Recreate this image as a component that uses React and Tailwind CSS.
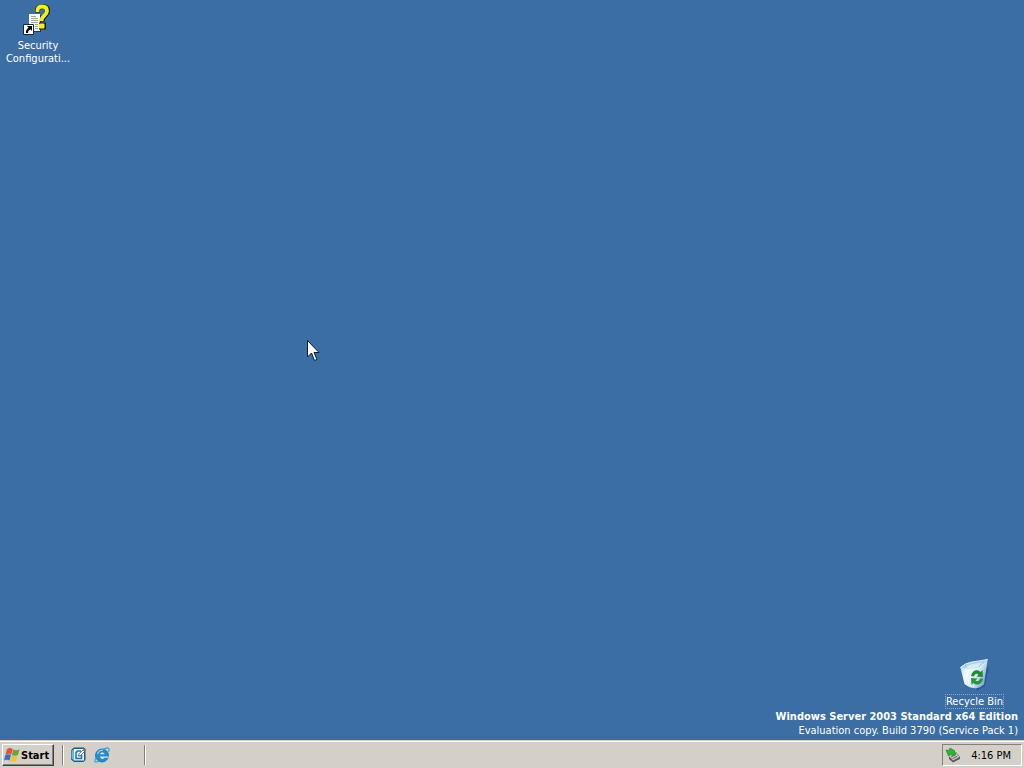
function SecurityIcon() {
  return (
    <svg width="32" height="32" viewBox="0 0 32 32" aria-hidden="true">
      <path d="M8 11h11v17H8z" fill="#26333f" />
      <path d="M7 10h11v17H7z" fill="#f6f5ee" />
      <path
        d="M9 12.500h5M9 14.500h7M9 16.500h7M9 18.500h7M13 20.500h3M13 22.500h3M13 24.500h3"
        stroke="#a3a29b"
        strokeWidth="1"
      />
      <path
        d="M15.500 8.500V6.500c0-3 2-4 5-4s5.200 1.200 5.200 4.500c0 5-5.500 4.500-5.500 10.500"
        fill="none"
        stroke="#222207"
        strokeWidth="5"
      />
      <path d="M17 18.500h7v7h-7z" fill="#222207" />
      <path
        d="M15.500 8V6.500c0-3 2-4 4.700-4s4.800 1.200 4.800 4.500c0 4.500-5.500 4.500-5.500 10"
        fill="none"
        stroke="#f3f018"
        strokeWidth="3.800"
      />
      <rect x="17" y="19.500" width="5.500" height="5" rx="1" fill="#f3f018" />
      <path d="M1.500 20.500h10v10h-10z" fill="#fff" stroke="#15263c" />
      <path d="M5 22h5v5L8.500 25.500C6.500 26.500 6 27.500 6 29H4c-.5-2 .5-4 2.700-5.300z" fill="#000" />
    </svg>
  );
}

function RecycleIcon() {
  return (
    <svg width="32" height="32" viewBox="0 0 32 32" aria-hidden="true">
      <defs>
        <linearGradient id="bin" x1="0" y1="0" x2="1" y2="0.500">
          <stop offset="0" stopColor="#a4d2ec" />
          <stop offset="0.350" stopColor="#f2fbff" />
          <stop offset="0.700" stopColor="#d3e9f5" />
          <stop offset="1" stopColor="#7eaed2" />
        </linearGradient>
      </defs>
      <path d="M8 28l12 4 7-4 4-20z" fill="#183f68" opacity="0.450" />
      <path d="M2.500 10Q11 12 20 9.500L29.500 3 26 26.500Q22 30 18 30.500 11 30 6.500 26z" fill="url(#bin)" />
      <path
        d="M2.500 9.500Q7 5 14 4T29.500 1.500Q28 5 21.500 9.500 10 12.500 2.500 9.500z"
        fill="#a9d0e7"
        stroke="#e3f5fd"
        strokeWidth="1"
      />
      <path d="M8 9.500Q11 6 18 5.500l6-1-4 4.500Q13 11.500 8 9.500z" fill="#d6edf8" />
      <path d="M5.500 13l3 12M9 13.500l2 13" stroke="#fff" strokeWidth="1" opacity="0.700" />
      <path d="M13 18c1-6 6.500-7.500 9.500-4l2-2 .5 7-6.500-.5 2-2c-1.500-1.500-4-.5-4.500 2z" fill="#228b32" />
      <path d="M25 20.500c-1 6-6.500 7.500-9.500 4.500l-2 2-.5-7 6.500.5-2 2c1.500 1.500 4 .5 4.500-2z" fill="#279637" />
    </svg>
  );
}

function WindowsFlag() {
  return (
    <svg width="16" height="16" viewBox="0 0 16 16" aria-hidden="true">
      <path d="M3 2Q6 0 8.800 2L7.300 7.500Q4.500 6 1.500 7.500z" fill="#e4532d" />
      <path d="M9.300 2.500Q12 4 15.500 2.300L14 8Q11 9.500 7.800 8z" fill="#67a53b" />
      <path d="M1.300 8Q4 6.500 7 8L5.500 13.500Q3 12 0 13.500z" fill="#386fcb" />
      <path d="M7.500 8.500Q10 10 13.700 8.500L12.200 14Q9 15.500 6 14z" fill="#f1c52e" />
    </svg>
  );
}

function ShowDesktopIcon() {
  return (
    <svg width="16" height="16" viewBox="0 0 16 16" aria-hidden="true">
      <path d="M2 2l2-1.500h10L15.500 2v11l-2 2H4l-3-2.500V4z" fill="#235b82" />
      <path d="M1.500 4L4 2v11.500l-2.500-2z" fill="#6fb6d8" />
      <path d="M4 2h10v11.500H4z" fill="#e2f4fc" />
      <path d="M11 4H7.500L6 5.500v6h5.500V8.500H8.500" fill="none" stroke="#2478ad" strokeWidth="1.600" />
      <path d="M8.500 9l.5-2 4-4L14.500 4.500l-4 4z" fill="#f3fafc" stroke="#315f7d" strokeWidth=".7" />
      <path d="M13 2.500L14.300 1 16 2.700 14.800 4z" fill="#bd5f36" />
    </svg>
  );
}

function ExplorerIcon() {
  return (
    <svg width="16" height="16" viewBox="0 0 16 16" aria-hidden="true">
      <circle cx="8" cy="8.500" r="6.500" fill="#278bd0" stroke="#1764a4" strokeWidth=".8" />
      <path d="M6 7.300C6.300 4.800 10.300 4.800 10.600 7.300zM6 9.600h8.500v1.200h-4C9.500 12.700 6.400 12 6 9.600z" fill="#c9e9f5" />
      <path d="M3.500 7C4.300 4.500 6.500 3.200 9 3.200" fill="none" stroke="#82d4f7" strokeWidth="1.300" />
      <path
        d="M2.200 10.500C-.5 15 1 16 5 14M8.500 2.500C13.500 0 16.500.5 14.500 4.800"
        fill="none"
        stroke="#3aa5dd"
        strokeWidth="1.300"
      />
    </svg>
  );
}

function HardwareIcon() {
  return (
    <svg width="16" height="16" viewBox="0 0 16 16" aria-hidden="true">
      <path d="M4 9l7-4 4 5v2l-7 3.500L4 12z" fill="#555d58" />
      <path d="M4 9l7-3.500 3.500 4.500L8 13.500z" fill="#c4cac5" />
      <path d="M6 10l5-2.500M7.500 11.700l5-2.500" stroke="#5c6660" strokeWidth="1" />
      <path d="M5 1l5 3-1 1 2 2-4 1.500-1.500-1.500-2 2L1 3l3 .5z" fill="#27b934" stroke="#167923" strokeWidth=".6" />
    </svg>
  );
}

function Separator() {
  return <span aria-hidden="true" className="h-5 w-0.5 border-l border-l-[#858178] border-r border-r-white" />;
}

export default function App() {
  return (
    <div className="flex min-h-screen flex-col overflow-hidden bg-[#3b6ea5] font-['DejaVu_Sans_Condensed','DejaVu_Sans',sans-serif] text-[11px] leading-[13px] text-white">
      <main className="relative flex flex-1 flex-col justify-between">
        <button className="mt-1 flex w-[76px] flex-col items-center gap-[3px] text-center">
          <SecurityIcon />
          <span>
            Security
            <br />
            Configurati...
          </span>
        </button>

        <svg
          className="absolute left-[30%] top-[46%]"
          width="14"
          height="22"
          viewBox="0 0 14 22"
          aria-hidden="true"
        >
          <path d="M.5.500v16.500L4.500 13l3 7.500 2.500-1-3-7H12z" fill="#fff" stroke="#111c2a" />
        </svg>

        <div className="flex flex-col items-end gap-px pb-0.5">
          <button className="mr-5 flex flex-col items-center gap-1">
            <RecycleIcon />
            <span className="border border-dotted border-[#8ba9c5]">Recycle Bin</span>
          </button>
          <div className="pr-1.5 text-right leading-[14px]">
            <p className="font-bold">Windows Server 2003 Standard x64 Edition</p>
            <p>Evaluation copy. Build 3790 (Service Pack 1)</p>
          </div>
        </div>
      </main>

      <footer className="flex h-7 items-center justify-between border-t border-t-[#d4d0c8] bg-[#d4d0c8] text-black">
        <div className="flex h-full flex-1 items-center border-t border-t-white pl-0.5">
          <button className="flex h-[22px] w-[52px] items-center gap-px border border-b-[#404040] border-l-white border-r-[#404040] border-t-white pl-px font-bold shadow-[inset_-1px_-1px_0_#858178]">
            <WindowsFlag />
            Start
          </button>
          <nav aria-label="Quick Launch" className="ml-2 flex items-center gap-2">
            <Separator />
            <button aria-label="Show Desktop" className="-ml-0.5">
              <ShowDesktopIcon />
            </button>
            <button aria-label="Internet Explorer">
              <ExplorerIcon />
            </button>
          </nav>
          <div className="ml-[34px] flex items-center">
            <Separator />
          </div>
        </div>
        <div className="flex h-full items-center border-t border-t-white pr-0.5">
          <div className="flex h-[22px] w-20 items-center justify-between border border-b-white border-l-[#858178] border-r-white border-t-[#858178] pl-0.5 pr-2.5">
            <HardwareIcon />
            <time dateTime="16:16">4:16 PM</time>
          </div>
        </div>
      </footer>
    </div>
  );
}
